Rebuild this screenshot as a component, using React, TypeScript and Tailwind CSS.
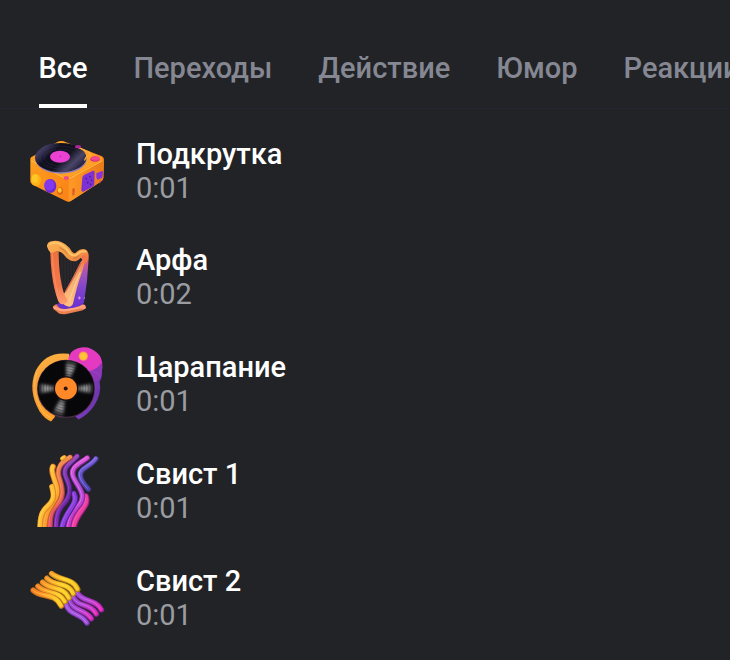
import React, { useState } from 'react';

interface Sound {
  title: string;
  duration: string;
  icon: React.ReactNode;
}

interface Strand {
  d: string;
  color: string;
  shade: string;
  light: string;
  width: number;
}

const iconClass = "w-[95px] h-[85px] shrink-0";

function TurntableIcon() {
  return (
    <svg viewBox="0 0 285 255" className={iconClass}>
      <defs>
        <linearGradient id="deckLeft" x1="0" y1="0" x2="1" y2="0.4">
          <stop offset="0" stopColor="#ffa21f" />
          <stop offset="1" stopColor="#f97a16" />
        </linearGradient>
        <linearGradient id="deckRight" x1="0" y1="0" x2="1" y2="0">
          <stop offset="0" stopColor="#ff9a26" />
          <stop offset="1" stopColor="#e97a18" />
        </linearGradient>
        <linearGradient id="deckVinyl" x1="0" y1="0" x2="1" y2="0.6">
          <stop offset="0" stopColor="#2a2647" />
          <stop offset="0.2" stopColor="#403b60" />
          <stop offset="0.4" stopColor="#10101f" />
          <stop offset="0.65" stopColor="#12121f" />
          <stop offset="0.85" stopColor="#4b4668" />
          <stop offset="1" stopColor="#26233d" />
        </linearGradient>
      </defs>
      <path d="M31 88Q30 82 40 78L108 38Q122 29 138 37L244 78Q253 82 252 92L250 144Q250 150 242 155L156 211Q145 219 133 211L39 165Q31 161 31 153Z" fill="url(#deckLeft)" />
      <path d="M147 145L252 90L250 144Q250 150 242 155L156 211Q151 215 145 215Z" fill="url(#deckRight)" />
      <path d="M35 86L108 39Q122 31 138 38L246 82Q250 87 243 92L155 139Q144 145 133 140L38 94Z" fill="#ff9f23" />
      <path d="M34 92L132 143Q144 148 155 142L248 92" fill="none" stroke="#ffc04a" strokeWidth="3" />
      <ellipse cx="123" cy="88" rx="77" ry="43" fill="#8d7fb8" />
      <ellipse cx="122" cy="83" rx="77" ry="44" fill="url(#deckVinyl)" />
      <ellipse cx="122" cy="83" rx="62" ry="34" fill="none" stroke="#4b466c" strokeWidth="1.5" opacity=".4" />
      <ellipse cx="122" cy="83" rx="49" ry="26" fill="none" stroke="#4b466c" strokeWidth="1.5" opacity=".4" />
      <ellipse cx="120" cy="80" rx="30" ry="18" fill="#ea40d3" />
      <ellipse cx="121" cy="79" rx="4" ry="2" fill="#c22f9f" />
      <path d="M176 53L208 67Q215 74 199 81L194 90" fill="none" stroke="#ffb13d" strokeWidth="4" strokeLinecap="round" />
      <ellipse cx="174" cy="50" rx="9" ry="5" fill="#b0259c" />
      <ellipse cx="225" cy="88" rx="14" ry="7" fill="#d3268f" />
      <ellipse cx="226" cy="85" rx="13" ry="7" fill="#f2468b" />
      <ellipse cx="139" cy="144" rx="8" ry="6" fill="#ef4b85" />
      <ellipse cx="48" cy="150" rx="15" ry="18" fill="#ffb218" />
      <ellipse cx="45" cy="146" rx="10" ry="13" fill="#ffc626" />
      <ellipse cx="91" cy="168" rx="18" ry="21" fill="#6c2bd2" />
      <ellipse cx="88" cy="165" rx="15" ry="17" fill="#8138ee" />
      <ellipse cx="120" cy="183" rx="9" ry="11" fill="#d96716" />
      <ellipse cx="119" cy="181" rx="6" ry="8" fill="#ffc532" />
      <path d="M157 177Q163 170 165 179L163 195L157 197Z" fill="#de5d28" />
      <path d="M187 142Q188 137 193 134L219 122Q225 121 224 128L223 163Q222 168 217 171L190 185Q184 186 184 179Z" fill="#7d31d5" />
      <path d="M229 130L246 123Q250 123 249 128L247 141Q246 145 233 149Q228 148 229 130Z" fill="#8932df" />
      <g fill="#3e2182">
        <circle cx="199" cy="146" r="2.5" />
        <circle cx="210" cy="140" r="2.5" />
        <circle cx="203" cy="158" r="2.5" />
        <circle cx="215" cy="151" r="2.5" />
        <circle cx="212" cy="163" r="2.5" />
      </g>
      <path d="M236 155L244 150L240 161Z" fill="#d94b64" />
    </svg>
  );
}

function HarpIcon() {
  return (
    <svg viewBox="0 5.25 285 255" className={iconClass}>
      <defs>
        <linearGradient id="harpPost" x1="0" y1="0" x2="0" y2="1">
          <stop offset="0" stopColor="#ed713e" />
          <stop offset="0.65" stopColor="#f3774c" />
          <stop offset="1" stopColor="#ff9f73" />
        </linearGradient>
        <linearGradient id="harpNeck" x1="0" y1="0" x2="1" y2="1">
          <stop offset="0" stopColor="#ffb257" />
          <stop offset="0.6" stopColor="#f19a45" />
          <stop offset="1" stopColor="#f0694b" />
        </linearGradient>
        <linearGradient id="harpBody" x1="0" y1="0" x2="0" y2="1">
          <stop offset="0" stopColor="#e2606b" />
          <stop offset="0.3" stopColor="#a956b4" />
          <stop offset="0.6" stopColor="#8145cb" />
          <stop offset="1" stopColor="#6a2fd2" />
        </linearGradient>
        <linearGradient id="harpFace" x1="0" y1="0" x2="0" y2="1">
          <stop offset="0" stopColor="#ef7a4e" />
          <stop offset="0.4" stopColor="#f6ab72" />
          <stop offset="1" stopColor="#ffc27c" />
        </linearGradient>
      </defs>
      <path d="M126 52V170M135 55V160M144 66V146M153 78V130M162 82V116M171 80V100" stroke="#3a3234" strokeWidth="2" />
      <path d="M99 213Q107 204 126 207L188 208Q198 211 198 219L186 226L139 236Q118 239 112 230L101 222Z" fill="#ed8050" />
      <path d="M110 208L130 194L166 204Q176 211 164 218L139 225Q118 223 110 208Z" fill="#6932c9" />
      <path d="M103 217Q124 228 143 224L190 214" fill="none" stroke="#ffa682" strokeWidth="7" strokeLinecap="round" />
      <path d="M188 65Q200 59 206 69Q203 137 192 202Q187 214 150 219L168 145Z" fill="url(#harpBody)" />
      <path d="M182 80Q190 68 197 74L184 116Q170 155 159 205Q153 221 135 210L119 198Q142 160 182 80Z" fill="url(#harpFace)" />
      <path d="M183 82Q164 124 136 170" fill="none" stroke="#d9624a" strokeWidth="4" />
      <path d="M181 110Q161 154 148 197" fill="none" stroke="#ffd7a6" strokeWidth="4" opacity=".7" />
      <path d="M91 47L116 48Q116 108 126 153Q133 184 143 194Q141 205 127 207Q121 207 115 199Q101 163 95 112Q91 77 91 47Z" fill="url(#harpPost)" />
      <path d="M97 55Q99 111 109 157Q114 181 124 197" fill="none" stroke="#ff9168" strokeWidth="4" opacity=".7" />
      <path d="M81 34Q80 19 99 17Q119 14 137 28Q148 36 155 48Q164 59 171 49Q181 39 195 42Q207 48 206 65Q203 83 192 88Q193 72 181 68Q169 83 151 76Q140 71 133 60Q124 48 110 48L93 54Q84 46 81 34Z" fill="url(#harpNeck)" />
      <path d="M91 26Q111 17 130 32Q142 42 149 54Q162 68 175 54Q185 45 197 49" fill="none" stroke="#ffc467" strokeWidth="6" strokeLinecap="round" />
      <path d="M118 37Q134 43 142 56M160 70Q170 69 177 61" fill="none" stroke="#b4662f" strokeWidth="2" />
      <circle cx="192" cy="65" r="5" fill="#f46d51" />
      <path d="M178 182L180 186L184 188L180 190L178 194L176 190L172 188L176 186Z" fill="#dc91f0" />
      <circle cx="193" cy="188" r="2" fill="#dc91f0" />
      <circle cx="190" cy="215" r="7" fill="#ff9c7e" />
    </svg>
  );
}

function VinylIcon() {
  return (
    <svg viewBox="0 10.5 285 255" className={iconClass}>
      <defs>
        <linearGradient id="vinylArc" x1="0" y1="0" x2="0.2" y2="1">
          <stop offset="0" stopColor="#ffb743" />
          <stop offset="0.5" stopColor="#f69b37" />
          <stop offset="1" stopColor="#ffa02a" />
        </linearGradient>
        <linearGradient id="vinylSide" x1="0" y1="0" x2="1" y2="1">
          <stop offset="0" stopColor="#7934b9" />
          <stop offset="0.5" stopColor="#7b3cbd" />
          <stop offset="1" stopColor="#61309b" />
        </linearGradient>
        <radialGradient id="vinylShine" cx="138" cy="144" r="86" gradientUnits="userSpaceOnUse">
          <stop offset="0.4" stopColor="#fff" stopOpacity=".35" />
          <stop offset="0.7" stopColor="#fff" stopOpacity=".6" />
          <stop offset="1" stopColor="#fff" stopOpacity=".08" />
        </radialGradient>
        <filter id="vinylSoft" x="-30%" y="-30%" width="160%" height="160%">
          <feGaussianBlur stdDeviation="4" />
        </filter>
      </defs>
      <path d="M147 40Q77 31 47 91Q22 151 59 213Q73 234 93 243L104 230L150 65Z" fill="url(#vinylArc)" />
      <path d="M51 94Q31 150 65 208Q76 224 96 234" fill="none" stroke="#ffc95b" strokeWidth="4" opacity=".5" />
      <path d="M208 65L242 76Q252 101 239 124Q246 162 221 198Q204 222 176 237L166 228L184 108Z" fill="url(#vinylSide)" />
      <path d="M145 54Q151 29 174 23Q207 13 231 37Q249 52 247 83Q238 105 219 117L200 84L146 63Z" fill="#e43ac2" />
      <path d="M244 66Q251 88 239 112Q230 131 217 115L205 92Q231 89 244 66Z" fill="#9037b8" />
      <circle cx="138" cy="145" r="87" fill="#4d2d48" />
      <circle cx="138" cy="144" r="85" fill="#08080b" />
      <g fill="url(#vinylShine)" filter="url(#vinylSoft)">
        <path d="M138 144L138 62Q156 61 171 67Z" />
        <path d="M138 144L98 218Q114 227 130 227Z" />
        <path d="M138 144L60 130Q57 143 60 158Z" />
        <path d="M138 144L216 130Q219 143 216 158Z" />
      </g>
      <g fill="none" stroke="#08080b" strokeWidth="2" opacity=".4">
        <circle cx="138" cy="144" r="43" />
        <circle cx="138" cy="144" r="51" />
        <circle cx="138" cy="144" r="59" />
        <circle cx="138" cy="144" r="67" />
        <circle cx="138" cy="144" r="76" />
      </g>
      <circle cx="138" cy="144" r="37" fill="#141013" />
      <circle cx="138" cy="144" r="33" fill="#ff8929" />
      <circle cx="137" cy="144" r="6" fill="#28150d" />
      <circle cx="190" cy="47" r="14" fill="#ff8f50" />
      <circle cx="190" cy="47" r="11" fill="#ffc239" />
      <path d="M207 90Q234 94 243 110" fill="none" stroke="#a84bd2" strokeWidth="2" opacity=".7" />
    </svg>
  );
}

// every strand is a dark edge, the body colour and a thin highlight
function Strands({ items }: { items: Strand[] }) {
  return (
    <g fill="none" strokeLinecap="round">
      {items.map((s) => (
        <g key={s.d}>
          <path d={s.d} stroke={s.shade} strokeWidth={s.width} />
          <path d={s.d} stroke={s.color} strokeWidth={s.width - 5} transform="translate(-1 -1)" />
          <path d={s.d} stroke={s.light} strokeWidth="3" opacity=".45" transform="translate(-3 -2)" />
        </g>
      ))}
    </g>
  );
}

const wavesUp: Strand[] = [
  { d: "M228 33C214 57 174 61 182 89C186 104 196 113 205 124", color: "url(#upBlue)", shade: "#443b92", light: "#a99bff", width: 16 },
  { d: "M197 146C209 181 164 190 158 250", color: "#ef3fa2", shade: "#a72487", light: "#ff7cc0", width: 19 },
  { d: "M202 31C178 49 149 59 160 88C174 119 200 139 180 169C161 190 147 206 144 250", color: "url(#upPink)", shade: "#8b2aa0", light: "#f5a3ff", width: 17 },
  { d: "M162 138C179 174 130 190 125 250", color: "#8b40dc", shade: "#55209a", light: "#b878ff", width: 18 },
  { d: "M172 26C154 48 124 58 139 91C158 130 147 151 133 167C111 188 109 210 108 250", color: "url(#upPurple)", shade: "#4a1b7c", light: "#b565e2", width: 17 },
  { d: "M151 29C126 44 110 58 117 88C133 134 127 155 111 172C91 191 90 213 90 250", color: "url(#upCoral)", shade: "#a13d4c", light: "#ffa787", width: 17 },
  { d: "M99 57C87 80 125 119 108 150C96 177 73 188 74 250", color: "url(#upOrange)", shade: "#c96a20", light: "#ffd66f", width: 18 },
  { d: "M96 117C106 150 98 163 82 177C63 193 60 214 60 250", color: "#ffbc36", shade: "#e08b22", light: "#fff06f", width: 17 },
  { d: "M127 33L133 29", color: "#ffba3d", shade: "#d98b2b", light: "#ffe07a", width: 14 },
];

function WavesUpIcon() {
  return (
    <svg viewBox="0 6.75 285 255" className={iconClass}>
      <defs>
        <linearGradient id="upOrange" x1="0" y1="50" x2="0" y2="238" gradientUnits="userSpaceOnUse">
          <stop offset="0" stopColor="#ffc73c" />
          <stop offset="0.5" stopColor="#ffa431" />
          <stop offset="1" stopColor="#fd9733" />
        </linearGradient>
        <linearGradient id="upCoral" x1="0" y1="25" x2="0" y2="238" gradientUnits="userSpaceOnUse">
          <stop offset="0" stopColor="#f0914a" />
          <stop offset="0.5" stopColor="#ee7050" />
          <stop offset="1" stopColor="#ea4c6c" />
        </linearGradient>
        <linearGradient id="upPurple" x1="0" y1="25" x2="0" y2="238" gradientUnits="userSpaceOnUse">
          <stop offset="0" stopColor="#9a4cb8" />
          <stop offset="0.5" stopColor="#6d2aa6" />
          <stop offset="1" stopColor="#8930b6" />
        </linearGradient>
        <linearGradient id="upPink" x1="0" y1="25" x2="0" y2="238" gradientUnits="userSpaceOnUse">
          <stop offset="0" stopColor="#e25bd9" />
          <stop offset="0.5" stopColor="#b44dda" />
          <stop offset="1" stopColor="#d136c4" />
        </linearGradient>
        <linearGradient id="upBlue" x1="0" y1="30" x2="0" y2="124" gradientUnits="userSpaceOnUse">
          <stop offset="0" stopColor="#8263e0" />
          <stop offset="1" stopColor="#5145b4" />
        </linearGradient>
        <clipPath id="upClip">
          <path d="M0 0H285V238H0Z" />
        </clipPath>
      </defs>
      <g clipPath="url(#upClip)">
        <Strands items={wavesUp} />
      </g>
    </svg>
  );
}

const wavesDown: Strand[] = [
  { d: "M172 98C186 128 228 116 244 149", color: "url(#downCool)", shade: "#8a2599", light: "#ed90ff", width: 17 },
  { d: "M159 109C173 145 212 128 229 162", color: "url(#downCool)", shade: "#8a2599", light: "#ed90ff", width: 17 },
  { d: "M148 121C160 155 198 149 214 176", color: "url(#downCool)", shade: "#8a2599", light: "#ed90ff", width: 17 },
  { d: "M138 130C146 169 184 158 201 189", color: "#a452dc", shade: "#66329c", light: "#d9a0ff", width: 17 },
  { d: "M95 41C120 64 158 53 173 88", color: "url(#downWarm)", shade: "#b87f1b", light: "#fff04b", width: 17 },
  { d: "M81 55C105 81 145 65 160 101", color: "url(#downWarm)", shade: "#b87f1b", light: "#fff04b", width: 17 },
  { d: "M68 67C92 92 132 79 147 114", color: "url(#downWarm)", shade: "#b87f1b", light: "#fff04b", width: 17 },
  { d: "M54 79C78 104 119 91 135 125", color: "url(#downWarm)", shade: "#b8721b", light: "#fff04b", width: 17 },
  { d: "M40 91C65 115 104 96 124 138", color: "url(#downWarm)", shade: "#c9741f", light: "#ffe04b", width: 17 },
];

function WavesDownIcon() {
  return (
    <svg viewBox="0 -9 285 255" className={iconClass}>
      <defs>
        <linearGradient id="downWarm" x1="35" y1="75" x2="166" y2="118" gradientUnits="userSpaceOnUse">
          <stop offset="0" stopColor="#f76f22" />
          <stop offset="0.35" stopColor="#ffa02d" />
          <stop offset="0.65" stopColor="#ffd02a" />
          <stop offset="1" stopColor="#f8c622" />
        </linearGradient>
        <linearGradient id="downCool" x1="155" y1="100" x2="230" y2="165" gradientUnits="userSpaceOnUse">
          <stop offset="0" stopColor="#8549d4" />
          <stop offset="0.5" stopColor="#b148d4" />
          <stop offset="1" stopColor="#ea2abb" />
        </linearGradient>
      </defs>
      <Strands items={wavesDown} />
    </svg>
  );
}

const tabs = ["Все", "Переходы", "Действие", "Юмор", "Реакции"];

const sounds: Sound[] = [
  { title: "Подкрутка", duration: "0:01", icon: <TurntableIcon /> },
  { title: "Арфа", duration: "0:02", icon: <HarpIcon /> },
  { title: "Царапание", duration: "0:01", icon: <VinylIcon /> },
  { title: "Свист 1", duration: "0:01", icon: <WavesUpIcon /> },
  { title: "Свист 2", duration: "0:01", icon: <WavesDownIcon /> },
];

export default function App() {
  const [activeTab, setActiveTab] = useState("Все");

  return (
    <div className="w-[730px] h-[660px] overflow-hidden bg-[#222327] font-['Roboto',sans-serif]">
      {/* TABS */}
      <div className="flex h-[109px] gap-[46px] overflow-hidden border-b border-[#262533] pl-[38.5px] pt-[51px]">
        {tabs.map((tab) => (
          <button
            key={tab}
            onClick={() => setActiveTab(tab)}
            className={`flex h-[57px] shrink-0 flex-col justify-start border-b-4 text-[29px] font-medium leading-[35px] ${activeTab === tab ? "border-white text-white" : "border-transparent text-[#858892]"}`}
          >
            {tab}
          </button>
        ))}
      </div>

      {/* SOUND LIST */}
      <div className="pl-5 pt-[21px]">
        {sounds.map((sound) => (
          <div key={sound.title} className="flex h-[106.75px] items-start gap-[21px]">
            {sound.icon}
            <div className="pt-[6.5px] leading-[34px]">
              <div className="text-[29px] font-medium text-white">{sound.title}</div>
              <div className="text-[29px] text-[#9a9ca1]">{sound.duration}</div>
            </div>
          </div>
        ))}
      </div>
    </div>
  );
}
